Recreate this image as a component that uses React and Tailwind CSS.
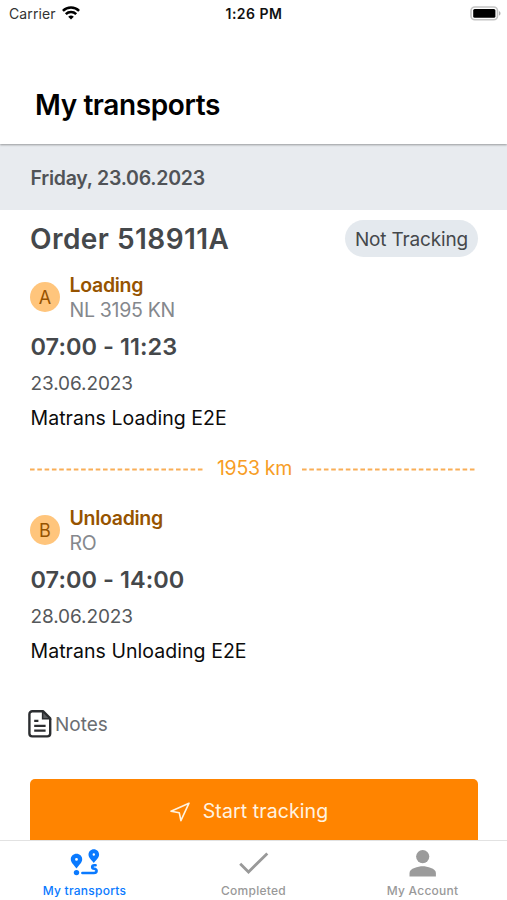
import { clsx } from "clsx";

const stops = [
  {
    letter: "A",
    type: "Loading",
    place: "NL 3195 KN",
    time: "07:00 - 11:23",
    date: "23.06.2023",
    name: "Matrans Loading E2E",
  },
  {
    letter: "B",
    type: "Unloading",
    place: "RO",
    time: "07:00 - 14:00",
    date: "28.06.2023",
    name: "Matrans Unloading E2E",
  },
];

const WifiIcon = () => (
  <svg width="18" height="14" viewBox="0 0 18 14" fill="none" stroke="#000" strokeWidth="2.5">
    <path d="M0.9 4.9a11.5 11.5 0 0 1 16.2 0" />
    <path d="M3.8 8.1a7.4 7.4 0 0 1 10.4 0" />
    <path d="M9 13.6 6.2 10.8a4 4 0 0 1 5.6 0z" fill="#000" stroke="none" />
  </svg>
);

const BatteryIcon = () => (
  <svg width="31" height="15" viewBox="0 0 31 15">
    <rect x="1" y="1" width="26.5" height="12.8" rx="3.8" fill="#fff" stroke="#c4c4c4" strokeWidth="1.6" />
    <rect x="3.2" y="3" width="22.2" height="8.8" rx="1.5" fill="#000" />
    <path d="M29 5.2c2 .7 2 3.6 0 4.3z" fill="#b0b0b0" />
  </svg>
);

const RouteIcon = () => (
  <svg width="30" height="28" viewBox="0 0 30 28" fill="#0a7aff">
    <path
      fillRule="evenodd"
      d="M6.5 4.8c-3.2 0-5.7 2.4-5.7 5.5 0 3.4 3.1 5.5 5.7 9.2 2.6-3.7 5.7-5.8 5.7-9.2 0-3.1-2.5-5.5-5.7-5.5zm0 4.2a1.4 1.4 0 1 1 0 2.8 1.4 1.4 0 0 1 0-2.8z"
    />
    <circle cx="6.5" cy="23.6" r="2.7" />
    <path
      fillRule="evenodd"
      d="M23.8.3c-3 0-5.3 2.3-5.3 5.2 0 3.2 2.8 5 5.3 8.6 2.5-3.6 5.3-5.4 5.3-8.6 0-2.9-2.3-5.2-5.3-5.2zm0 4a1.2 1.2 0 1 1 0 2.4 1.2 1.2 0 0 1 0-2.4z"
    />
    <path
      d="M25.6 16.3h-1.3c-2.8 0-2.8 3.3 0 3.5 3.2.2 3 4.2-.4 4.2H12.4"
      fill="none"
      stroke="#0a7aff"
      strokeWidth="2.6"
      strokeLinecap="round"
    />
  </svg>
);

const CheckIcon = () => (
  <svg width="30" height="23" viewBox="0 0 30 23" fill="none" stroke="#999" strokeWidth="2.8">
    <path d="M1.2 11.8 9.5 20 28.3 1.4" />
  </svg>
);

const PersonIcon = () => (
  <svg width="28" height="28" viewBox="0 0 28 28" fill="#9b9b9b">
    <circle cx="13.7" cy="7.6" r="6.6" />
    <path d="M.5 27.4v-3.5c0-4.3 8.8-6.6 13.2-6.6s13.2 2.3 13.2 6.6v3.5z" />
  </svg>
);

const NotesIcon = () => (
  <svg width="24" height="28" viewBox="0 0 24 28" fill="none" stroke="#2b2d30" strokeWidth="2.4">
    <path
      d="M4.3 1.3h10.9l7 7v15.2a2.9 2.9 0 0 1-2.9 2.9h-15a2.9 2.9 0 0 1-2.9-2.9V4.2a2.9 2.9 0 0 1 2.9-2.9z"
      strokeLinejoin="round"
    />
    <path d="M14.6 1.3v7.4h7.4z" fill="#5b5e61" strokeWidth="1.5" />
    <path d="M6.2 10.8h4.2M6.2 15.8h11.4M6.2 20.7h11.4" strokeWidth="2.2" />
  </svg>
);

const ArrowIcon = () => (
  <svg width="20" height="20" viewBox="0 0 20 20" fill="none" stroke="#fff3e0" strokeWidth="1.6" strokeLinejoin="round">
    <path d="M19 1.2 1 9.2l8.3 1.6 1.6 7.8z" />
  </svg>
);

const Stop = ({ stop }) => (
  <div>
    <div className="flex items-center gap-[9.5px]">
      <div className="mb-[2px] flex h-[30px] w-[30px] items-center justify-center rounded-full bg-[#ffc57c] text-[18px] text-[#965300]">
        {stop.letter}
      </div>
      <div>
        <p className="text-[19.5px] leading-6 font-semibold tracking-[-0.3px] text-[#965300]">{stop.type}</p>
        <p className="pt-px text-[19.5px] leading-[25px] tracking-[-0.3px] text-[#85888d]">{stop.place}</p>
      </div>
    </div>
    <p className="mt-[8.5px] pl-[0.5px] text-[23.5px] leading-[30px] font-semibold tracking-[0.05px] text-[#45484b]">
      {stop.time}
    </p>
    <p className="mt-[10px] pl-[0.5px] text-[19px] leading-6 tracking-[-0.1px] text-[#55585b]">{stop.date}</p>
    <p className="mt-[10.5px] pl-[0.5px] text-[19.5px] leading-6 tracking-[0.05px] text-[#0b0b0b]">{stop.name}</p>
  </div>
);

const DashedLine = () => (
  <svg width="175" height="3" className="mt-0.5 shrink-0">
    <line x1="0" y1="1.5" x2="175" y2="1.5" stroke="#f9ae57" strokeWidth="2" strokeDasharray="4.6 2.7" />
  </svg>
);

const Tab = ({ icon, label, active }) => (
  <div
    className={clsx(
      "flex flex-1 flex-col items-center text-[12px] leading-4 font-medium tracking-[0.25px]",
      active ? "text-[#0a7aff]" : "text-[#999]"
    )}
  >
    <div className="flex h-[34px] items-center justify-center pt-[10px]">{icon}</div>
    <span className="mt-2">{label}</span>
  </div>
);

export default function App() {
  return (
    <div className="flex h-[900px] w-[507px] flex-col overflow-hidden bg-white font-['Inter',sans-serif]">
      <header className="relative z-10 h-36 shrink-0 bg-white shadow-[0_1px_2px_rgba(0,0,0,0.35)]">
        <div className="grid h-[26px] grid-cols-3 items-center pr-[6px] pl-[9px]">
          <div className="flex items-center gap-[6px] text-[14px] tracking-[0.1px] text-[#333]">
            Carrier <WifiIcon />
          </div>
          <div className="pr-[2px] text-center text-[14px] font-semibold tracking-[0.5px] text-[#111]">1:26 PM</div>
          <div className="flex justify-end">
            <BatteryIcon />
          </div>
        </div>
        <h1 className="mt-[61px] pl-[35px] text-[28px] leading-9 font-semibold tracking-[-0.4px] text-black">
          My transports
        </h1>
      </header>

      <div className="flex h-[66px] shrink-0 items-center bg-[#e8ebef] px-[30.5px] pt-[3px] text-[19.5px] font-semibold tracking-[-0.25px] text-[#505357]">
        Friday, 23.06.2023
      </div>

      <main className="flex-1 overflow-hidden pt-[10px] pr-[29px] pl-[30px]">
        <div className="flex h-[37px] items-center justify-between">
          <h2 className="pt-px text-[28px] font-semibold tracking-[0.45px] text-[#45484b]">Order 518911A</h2>
          <span className="flex h-[37px] w-[133px] items-center justify-center rounded-full bg-[#e4e9ee] pt-[3px] text-[19px] tracking-[-0.15px] text-[#45484b]">
            Not Tracking
          </span>
        </div>

        <div className="mt-4">
          <Stop stop={stops[0]} />
        </div>
        <div className="mt-[26px] flex h-6 items-center justify-between pr-px text-[19.5px] tracking-[-0.3px] text-[#f79d25]">
          <DashedLine />
          <span className="pt-px pl-0.5">1953 km</span>
          <DashedLine />
        </div>
        <div className="mt-[26px]">
          <Stop stop={stops[1]} />
        </div>

        <div className="mt-[47px] -ml-[2px] flex h-7 items-center gap-[3px] text-[19px] text-[#6b6e72]">
          <NotesIcon />
          <span className="pt-[3px]">Notes</span>
        </div>

        <button className="mt-[41px] flex h-[66px] w-full items-center justify-center gap-[13px] rounded-[5px] bg-[#ff8400] pr-[10px] text-[19.5px] tracking-[0.1px] text-[#fff3e0]">
          <ArrowIcon />
          <span>Start tracking</span>
        </button>
      </main>

      <nav className="flex h-[60px] shrink-0 border-t border-[#e2e2e2] bg-white">
        <Tab icon={<RouteIcon />} label="My transports" active />
        <Tab icon={<CheckIcon />} label="Completed" />
        <Tab icon={<PersonIcon />} label="My Account" />
      </nav>
    </div>
  );
}
